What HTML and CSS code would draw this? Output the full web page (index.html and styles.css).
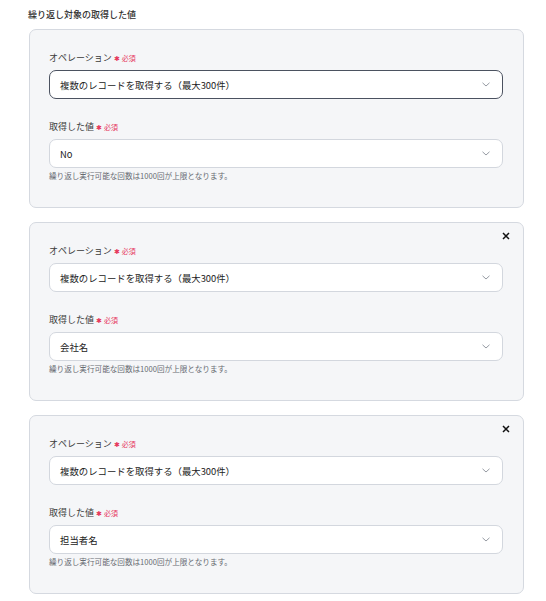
FILE: index.html
```html
<!DOCTYPE html>
<html lang="ja">
<head>
  <meta charset="UTF-8">
  <title>繰り返し設定</title>
  <link rel="stylesheet" href="styles.css">
</head>
<body>
  <div class="section">
    <div class="section-title">繰り返し対象の取得した値</div>

    <div class="loop-card">
      <div class="field">
        <div class="field-label">オペレーション<span class="req"><span class="req-mark">✱</span>必須</span></div>
        <div class="select focused">
          <span class="select-value">複数のレコードを取得する（最大300件）</span>
          <svg class="chevron" width="8" height="5" viewBox="0 0 8 5"><path d="M0.5 0.8 L4 4 L7.5 0.8" fill="none" stroke="#8a8f98" stroke-width="0.9"/></svg>
        </div>
      </div>
      <div class="field">
        <div class="field-label">取得した値<span class="req"><span class="req-mark">✱</span>必須</span></div>
        <div class="select">
          <span class="select-value">No</span>
          <svg class="chevron" width="8" height="5" viewBox="0 0 8 5"><path d="M0.5 0.8 L4 4 L7.5 0.8" fill="none" stroke="#8a8f98" stroke-width="0.9"/></svg>
        </div>
        <div class="help">繰り返し実行可能な回数は1000回が上限となります。</div>
      </div>
    </div>

    <div class="loop-card">
      <button class="remove" type="button" aria-label="削除">
        <svg width="8" height="8" viewBox="0 0 8 8"><path d="M1 1 L7 7 M7 1 L1 7" stroke="#111" stroke-width="1.5"/></svg>
      </button>
      <div class="field">
        <div class="field-label">オペレーション<span class="req"><span class="req-mark">✱</span>必須</span></div>
        <div class="select">
          <span class="select-value">複数のレコードを取得する（最大300件）</span>
          <svg class="chevron" width="8" height="5" viewBox="0 0 8 5"><path d="M0.5 0.8 L4 4 L7.5 0.8" fill="none" stroke="#8a8f98" stroke-width="0.9"/></svg>
        </div>
      </div>
      <div class="field">
        <div class="field-label">取得した値<span class="req"><span class="req-mark">✱</span>必須</span></div>
        <div class="select">
          <span class="select-value">会社名</span>
          <svg class="chevron" width="8" height="5" viewBox="0 0 8 5"><path d="M0.5 0.8 L4 4 L7.5 0.8" fill="none" stroke="#8a8f98" stroke-width="0.9"/></svg>
        </div>
        <div class="help">繰り返し実行可能な回数は1000回が上限となります。</div>
      </div>
    </div>

    <div class="loop-card">
      <button class="remove" type="button" aria-label="削除">
        <svg width="8" height="8" viewBox="0 0 8 8"><path d="M1 1 L7 7 M7 1 L1 7" stroke="#111" stroke-width="1.5"/></svg>
      </button>
      <div class="field">
        <div class="field-label">オペレーション<span class="req"><span class="req-mark">✱</span>必須</span></div>
        <div class="select">
          <span class="select-value">複数のレコードを取得する（最大300件）</span>
          <svg class="chevron" width="8" height="5" viewBox="0 0 8 5"><path d="M0.5 0.8 L4 4 L7.5 0.8" fill="none" stroke="#8a8f98" stroke-width="0.9"/></svg>
        </div>
      </div>
      <div class="field">
        <div class="field-label">取得した値<span class="req"><span class="req-mark">✱</span>必須</span></div>
        <div class="select">
          <span class="select-value">担当者名</span>
          <svg class="chevron" width="8" height="5" viewBox="0 0 8 5"><path d="M0.5 0.8 L4 4 L7.5 0.8" fill="none" stroke="#8a8f98" stroke-width="0.9"/></svg>
        </div>
        <div class="help">繰り返し実行可能な回数は1000回が上限となります。</div>
      </div>
    </div>
  </div>
</body>
</html>
```

FILE: styles.css
```css
html, body {
  margin: 0;
  padding: 0;
  background: #fff;
  font-family: 'Noto Sans CJK JP', 'Noto Sans', sans-serif;
  color: #333;
}
.section {
  padding: 8px 22px 0 29px;
}
.section-title {
  font-size: 9px;
  line-height: 14px;
  font-weight: 500;
  color: #2f2f2f;
  margin-left: -1px;
  margin-bottom: 7px;
}
.loop-card {
  position: relative;
  background: #f5f6f8;
  border: 1px solid #d5d9e0;
  border-radius: 7px;
  padding: 20px 20px 26px 19px;
  margin-bottom: 14px;
  display: flex;
  flex-direction: column;
  gap: 20px;
}
.field-label {
  font-size: 9px;
  line-height: 16px;
  color: #3a3a3a;
  margin-bottom: 4px;
  display: flex;
  align-items: center;
}
.req {
  color: #e6365c;
  font-size: 7px;
  margin-left: 2px;
  display: inline-flex;
  align-items: center;
}
.req-mark {
  font-size: 7px;
  margin-right: 2px;
}
.select {
  height: 29px;
  box-sizing: border-box;
  background: #fff;
  border: 1px solid #d3d7de;
  border-radius: 7px;
  padding: 0 12px 0 10px;
  display: flex;
  align-items: center;
  justify-content: space-between;
}
.select.focused {
  border-color: #4b5260;
}
.select-value {
  font-size: 9.4px;
  color: #222;
}
.chevron {
  display: block;
}
.help {
  margin-top: 3px;
  font-size: 7.6px;
  line-height: 10px;
  color: #666a71;
}
.remove {
  position: absolute;
  top: 7px;
  right: 11px;
  width: 12px;
  height: 12px;
  padding: 0;
  border: none;
  background: none;
  display: flex;
  align-items: center;
  justify-content: center;
  cursor: pointer;
}
```
